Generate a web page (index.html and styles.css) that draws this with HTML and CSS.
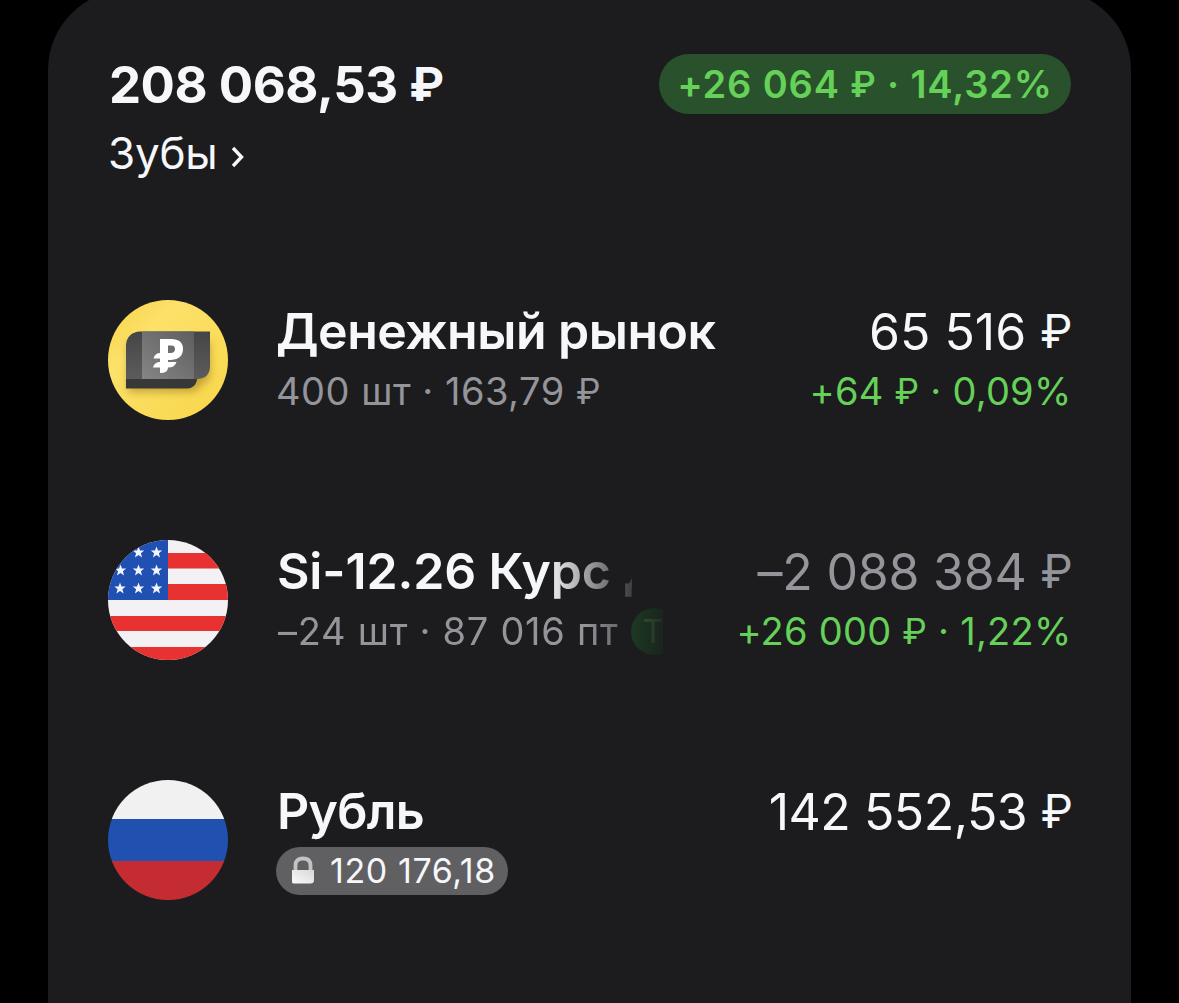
FILE: index.html
```html
<!DOCTYPE html>
<html lang="ru">
<head>
<meta charset="utf-8">
<title>Зубы</title>
<link rel="stylesheet" href="styles.css">
</head>
<body>
<main class="card">
  <header class="summary">
    <div class="summary-text">
      <div class="total">208 068,53 <span class="rub">₽</span></div>
      <div class="account">Зубы <svg class="chevron" viewBox="0 0 14 22"><path d="M2 2L10.500 11L2 20"/></svg></div>
    </div>
    <div class="profit-pill"><span>+26 064 <span class="rub">₽</span> · 14,32%</span></div>
  </header>

  <section class="row">
    <svg class="logo" viewBox="0 0 120 120">
      <defs>
        <linearGradient id="gold" x1="0" y1="0" x2="1" y2="1"><stop offset="0" stop-color="#f6d443"/><stop offset=".3" stop-color="#fce16a"/><stop offset="1" stop-color="#f8d648"/></linearGradient>
        <linearGradient id="side" x1="0" y1="0" x2="0" y2="1"><stop offset="0" stop-color="#454545"/><stop offset="1" stop-color="#5c5c5c"/></linearGradient>
        <linearGradient id="face" x1="1" y1="0" x2="0" y2="1"><stop offset="0" stop-color="#5e5e5e"/><stop offset="1" stop-color="#858585"/></linearGradient>
        <filter id="soft" x="-30%" y="-30%" width="160%" height="170%"><feGaussianBlur stdDeviation="4"/></filter>
      </defs>
      <circle cx="60" cy="60" r="60" fill="url(#gold)"/>
      <path d="M20 42H102V78L86 92H20Z" fill="#96731c" opacity=".55" filter="url(#soft)"/>
      <path d="M18 76H89V80Q87 88.500 79 88.500H18Z" fill="#383838"/>
      <path d="M18 79V45Q19 33 31 31.500H102V66Q102 78 90 79Z" fill="url(#side)"/>
      <path d="M34 31.500H86V79H34Z" fill="url(#face)"/>
      <path fill="#fff" fill-rule="evenodd" d="M52 39H63Q75 39 75 49T63 60H60V62H68.500Q67 67.500 60 67.500Q60 73 52 73V67.500H45Q46.500 62 52 62V58.500H45.500Q47 53 52 53ZM60 45.500V53H62.500Q67 53 67 49T62.500 45.500Z"/>
    </svg>
    <div class="info">
      <div class="name money">Денежный рынок</div>
      <div class="detail d1">400 шт · 163,79 <span class="rub">₽</span></div>
    </div>
    <div class="values">
      <div class="amount a1">65 516 <span class="rub">₽</span></div>
      <div class="gain g1">+64 <span class="rub">₽</span> · 0,09%</div>
    </div>
  </section>

  <section class="row">
    <svg class="logo" viewBox="0 0 120 120">
      <defs>
        <clipPath id="disc"><circle cx="60" cy="60" r="60"/></clipPath>
        <path id="star" d="M0-6L1.500-1.900L5.700-1.900L2.400.8L3.600 5L0 2.500L-3.600 5L-2.400.8L-5.700-1.900L-1.500-1.900Z"/>
      </defs>
      <g clip-path="url(#disc)">
        <path fill="#f3f1f3" d="M0 0H120V120H0Z"/>
        <path fill="#e83232" d="M60 13H120V28.500H60ZM60 44H120V60H60ZM0 76H120V91H0ZM0 107H120V120H0Z"/>
        <path fill="#2050b2" d="M0 0H60V60H0Z"/>
        <g fill="#f1f4fc">
          <use href="#star" x="30.500" y="12.500"/><use href="#star" x="48.500" y="12.500"/>
          <use href="#star" x="12.500" y="30.500"/><use href="#star" x="30.500" y="30.500"/><use href="#star" x="48.500" y="30.500"/>
          <use href="#star" x="12" y="48.500"/><use href="#star" x="30.500" y="48.500"/><use href="#star" x="48.500" y="48.500"/>
        </g>
      </g>
    </svg>
    <div class="info">
      <div class="name futures">Si-12.26 Курс Д</div>
      <div class="detail d2">–24 шт · 87 016 пт<span class="tag">Т</span></div>
    </div>
    <div class="values">
      <div class="amount a2">–2 088 384 <span class="rub">₽</span></div>
      <div class="gain g2">+26 000 <span class="rub">₽</span> · 1,22%</div>
    </div>
  </section>

  <section class="row last">
    <svg class="logo" viewBox="0 0 120 120">
      <g clip-path="url(#disc)">
        <path fill="#f1f1f1" d="M0 0H120V39H0Z"/>
        <path fill="#2050b0" d="M0 39H120V81H0Z"/>
        <path fill="#c52c32" d="M0 81H120V120H0Z"/>
      </g>
    </svg>
    <div class="info">
      <div class="name ruble">Рубль</div>
      <div class="locked">
        <svg class="lock" viewBox="0 0 24 28">
          <defs><linearGradient id="lockbody" x1="0" y1="1" x2="1" y2="0"><stop offset="0" stop-color="#fafafa"/><stop offset="1" stop-color="#d8d8d8"/></linearGradient></defs>
          <path d="M4.500 15V9.500Q4.500 2.500 12 2.500T19.500 9.500V15" fill="none" stroke="#c3c3c3" stroke-width="3.800"/>
          <path d="M1 14H23V24Q23 27.500 19.500 27.500H3Q1 27.500 1 26Z" fill="url(#lockbody)"/>
        </svg>
        <span>120 176,18</span>
      </div>
    </div>
    <div class="values">
      <div class="amount a3">142 552,53 <span class="rub">₽</span></div>
    </div>
  </section>
</main>
</body>
</html>
```
FILE: styles.css
```css
* { box-sizing: border-box; }
body {
  display: flow-root;
  margin: 0;
  background: #000;
  color: #f6f7fa;
  font-family: Inter, "Noto Sans", sans-serif;
  white-space: nowrap;
}
.card {
  width: 1083px;
  height: 1013px;
  margin: -10px 0 0 48px;
  padding: 64px 60px 0;
  border-radius: 80px 80px 0 0;
  background: #1c1c1e;
}
.rub {
  font-size: .92em;
  line-height: 0;
  vertical-align: .035em;
}
.summary {
  display: flex;
  justify-content: space-between;
  align-items: flex-start;
  height: 246px;
}
.total {
  height: 60px;
  padding-left: 1px;
  font-size: 51px;
  line-height: 61px;
  font-weight: 700;
  letter-spacing: -.5px;
}
.account {
  height: 60px;
  margin-top: 9px;
  font-size: 44px;
  line-height: 60px;
  letter-spacing: -.2px;
}
.chevron {
  width: 14px;
  height: 22px;
  margin-left: 1px;
  vertical-align: 1px;
  fill: none;
  stroke: #f6f7fa;
  stroke-width: 3.4;
}
.profit-pill {
  display: flex;
  justify-content: center;
  width: 412px;
  height: 60px;
  border-radius: 30px;
  background: #29512b;
  color: #65d159;
  font-size: 38px;
  line-height: 60px;
  font-weight: 600;
  letter-spacing: .85px;
}
.row {
  display: flex;
  height: 240px;
}
.row.last { height: 120px; }
.logo { width: 120px; height: 120px; flex: none; }
.info { margin: 2px 0 0 48px; }
.name {
  height: 60px;
  font-size: 50px;
  line-height: 59px;
  font-weight: 600;
}
.money { letter-spacing: -.5px; }
.ruble { letter-spacing: -.7px; padding-left: 1px; }
.detail { height: 58px; font-size: 38px; line-height: 58px; color: #94949b; }
.d1 { letter-spacing: .5px; }
.values {
  display: flex;
  flex-direction: column;
  align-items: flex-end;
  margin: 2px 0 0 auto;
}
.amount { height: 60px; font-size: 50px; line-height: 60px; margin-right: -1.5px; }
.gain {
  height: 58px;
  margin-right: -.5px;
  font-size: 38px;
  line-height: 58px;
  color: #65d159;
  letter-spacing: .25px;
}
.a2 { color: #94949b; letter-spacing: -.2px; }
.a3 { letter-spacing: -.5px; }
.futures {
  width: 356px;
  padding-left: 1px;
  overflow: hidden;
  letter-spacing: -.15px;
  -webkit-mask-image: linear-gradient(90deg, #000 270px, transparent 372px);
  mask-image: linear-gradient(90deg, #000 270px, transparent 372px);
}
.d2 {
  display: flex;
  align-items: center;
  width: 387px;
  padding-left: 2px;
  overflow: hidden;
  letter-spacing: .72px;
  -webkit-mask-image: linear-gradient(90deg, #000 310px, transparent 398px);
  mask-image: linear-gradient(90deg, #000 310px, transparent 398px);
}
.tag {
  flex: none;
  width: 47px;
  height: 47px;
  margin-left: 13px;
  padding-right: 4px;
  border-radius: 50%;
  background: #1b5a26;
  color: #52b04a;
  font-size: 32px;
  line-height: 47px;
  text-align: center;
  letter-spacing: 0;
}
.locked {
  display: flex;
  align-items: center;
  width: 232px;
  height: 48px;
  margin-top: 5px;
  padding-left: 15px;
  border-radius: 24px;
  background: #606062;
  font-size: 34px;
  line-height: 48px;
  letter-spacing: .6px;
}
.lock { width: 24px; height: 28px; margin: -2px 15px 0 0; }
```
